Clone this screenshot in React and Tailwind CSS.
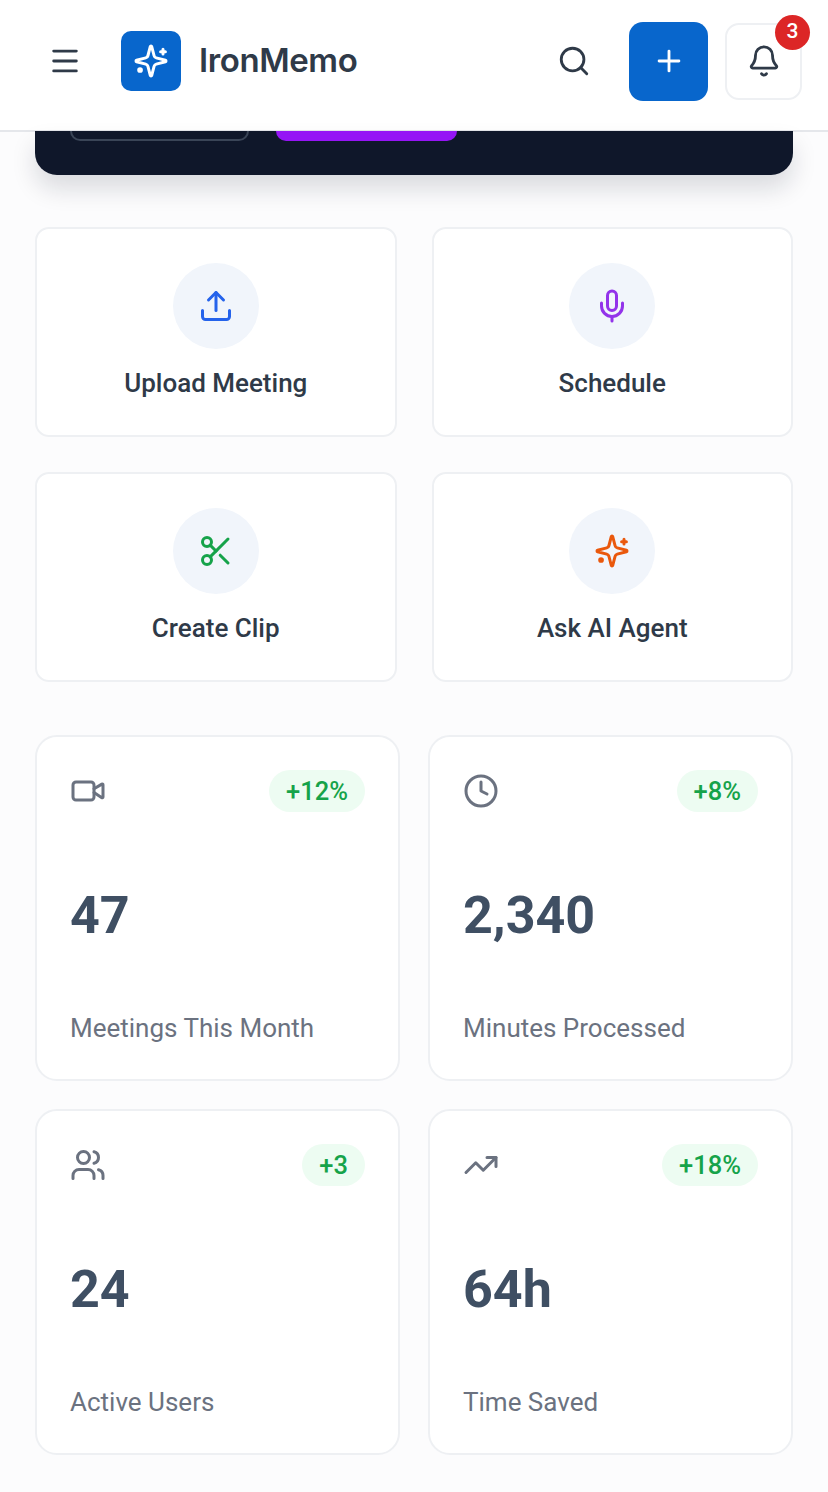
import React from "react";
import { Menu, Search, Plus, Bell, Upload, Mic, Scissors, Video, Clock, Users, TrendingUp } from "lucide-react";

const roboto = "font-['Roboto',sans-serif]";

function Spark({ size = 36, className = "" }) {
  return (
    <svg width={size} height={size} viewBox="0 0 24 24" fill="none" stroke="currentColor" strokeWidth="2" strokeLinecap="round" strokeLinejoin="round" className={className}>
      <path d="M9.937 15.5A2 2 0 0 0 8.5 14.063l-6.135-1.582a.5.5 0 0 1 0-.962L8.5 9.936A2 2 0 0 0 9.937 8.5l1.582-6.135a.5.5 0 0 1 .963 0L14.063 8.5A2 2 0 0 0 15.5 9.937l6.135 1.581a.5.5 0 0 1 0 .964L15.5 14.063a2 2 0 0 0-1.437 1.437l-1.582 6.135a.5.5 0 0 1-.963 0z" />
      <path d="M20 4.2v3.2M18.4 5.8h3.2" />
      <circle cx="4.7" cy="18" r="0.9" fill="currentColor" />
    </svg>
  );
}

function Action({ icon: Icon, label, color }) {
  return (
    <div className="h-[210px] rounded-[14px] border-2 border-[#eef0f3] bg-white flex flex-col items-center pt-[34px]">
      <div className="w-[86px] h-[86px] rounded-full bg-[#f1f5fb] flex items-center justify-center">
        <Icon size={36} strokeWidth={2} className={color} />
      </div>
      <div className="mt-[17px] text-[26px] leading-[34px] font-medium text-[#2f3a48]">{label}</div>
    </div>
  );
}

function Stat({ icon: Icon, badge, value, label }) {
  return (
    <div className="h-[346px] rounded-[22px] border-2 border-[#eef0f3] bg-white px-[33px] pt-[33px] flex flex-col">
      <div className="flex items-center justify-between h-[42px]">
        <Icon size={36} strokeWidth={2} className="text-[#6b7280]" />
        <span className="h-[42px] rounded-full bg-[#edfcf2] px-[17px] flex items-center text-[25.5px] font-medium text-[#16a34a]">{badge}</span>
      </div>
      <div className="mt-[69px] h-[70px] flex items-center text-[52px] font-bold text-[#3f4f63]">{value}</div>
      <div className="mt-[60px] text-[26px] leading-[34px] text-[#6b7280]">{label}</div>
    </div>
  );
}

export default function App() {
  return (
    <div className={`w-[828px] h-[1492px] overflow-hidden bg-[#fcfcfd] ${roboto}`}>
      <header className="h-[132px] bg-white border-b-2 border-[#e5e7eb] pl-[48px] pr-[26px] pb-2 flex items-center">
        <Menu size={34} strokeWidth={2} className="text-[#2f3a48]" />
        <div className="ml-[39px] w-[60px] h-[60px] rounded-[10px] bg-[#0866cc] flex items-center justify-center">
          <Spark size={36} className="text-white" />
        </div>
        <div className="ml-[18px] text-[33px] font-semibold text-[#2f3a48] font-['Inter',sans-serif] tracking-[-0.4px]">IronMemo</div>
        <Search size={34} strokeWidth={2} className="ml-auto text-[#2f3a48]" />
        <button className="ml-[38px] w-[79px] h-[79px] rounded-[14px] bg-[#0866cc] flex items-center justify-center">
          <Plus size={34} strokeWidth={2} className="text-white" />
        </button>
        <div className="relative ml-[17px] w-[77px] h-[77px] rounded-[14px] border-2 border-[#eef0f3] bg-white flex items-center justify-center">
          <Bell size={34} strokeWidth={2} className="text-[#2f3a48]" />
          <span className="absolute -top-[10px] -right-[10px] w-[35px] h-[35px] rounded-full bg-[#dc2626] text-white text-[21px] flex items-center justify-center font-medium">3</span>
        </div>
      </header>

      <div className="mx-[35px] h-[44px] -mt-px rounded-b-[22px] bg-[#0f172a] shadow-[0_14px_24px_rgba(15,23,42,0.14)] px-[35px] flex items-start gap-[27px]">
        <div className="w-[179px] h-[10px] rounded-b-[10px] border-2 border-t-0 border-[#3a4557]"></div>
        <div className="w-[181px] h-[10px] rounded-b-[10px] bg-[#9515f5]"></div>
      </div>

      <section className="mx-[35px] mt-[52px] grid grid-cols-2 gap-x-[35px] gap-y-[35px]">
        <Action icon={Upload} label="Upload Meeting" color="text-[#2563eb]" />
        <Action icon={Mic} label="Schedule" color="text-[#9333ea]" />
        <Action icon={Scissors} label="Create Clip" color="text-[#16a34a]" />
        <Action icon={Spark} label="Ask AI Agent" color="text-[#ea580c]" />
      </section>

      <section className="mx-[35px] mt-[53px] grid grid-cols-2 gap-x-[28px] gap-y-[28px]">
        <Stat icon={Video} badge="+12%" value="47" label="Meetings This Month" />
        <Stat icon={Clock} badge="+8%" value="2,340" label="Minutes Processed" />
        <Stat icon={Users} badge="+3" value="24" label="Active Users" />
        <Stat icon={TrendingUp} badge="+18%" value="64h" label="Time Saved" />
      </section>
    </div>
  );
}
